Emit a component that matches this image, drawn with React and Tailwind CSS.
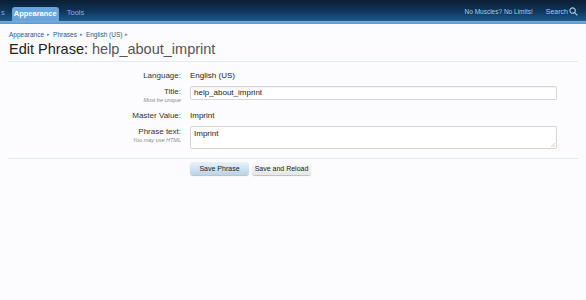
import React from "react";

const Crumb = ({ children }) => (
  <span className="flex items-center">
    <span>{children}</span>
    <span className="mx-[3px] text-[5px] text-[#5a7da3]">▸</span>
  </span>
);

const Row = ({ label, hint, children, top = false }) => (
  <div className={"flex " + (top ? "items-start" : "items-center")}>
    <div className="w-[181px] shrink-0 pr-0 text-right">
      <div className="text-[8px] leading-[11px] text-[#333]">{label}</div>
      {hint && (
        <div className="text-[5.5px] italic leading-[7px] text-[#8a8a8a]">{hint}</div>
      )}
    </div>
    <div className="ml-[9px] flex-1 pr-[29px]">{children}</div>
  </div>
);

export default function App() {
  return (
    <div className="min-h-[300px] w-[586px] bg-[#fcfcfe] font-['Liberation_Sans',Arial,sans-serif]">
      {/* top navigation */}
      <div className="flex h-[21px] items-end bg-gradient-to-b from-[#0a1f36] via-[#103357] to-[#1b5a8d]">
        <div className="flex h-[14px] items-end text-[7.5px] font-bold">
          <span className="ml-[1px] mr-[7px] pb-[3px] font-normal text-[#7fa9d0]">s</span>
          <span className="flex h-[14px] w-[47px] items-center justify-center rounded-t-[3px] bg-[#6aa5da] text-white">
            Appearance
          </span>
          <span className="ml-[8px] pb-[3px] font-normal text-[#8cb4d9]">Tools</span>
        </div>
        <div className="ml-auto flex items-center gap-[13px] pb-[4px] pr-[8px] text-[6.5px] text-[#a8cbeb]">
          <span>No Muscles? No Limits!</span>
          <span className="flex items-center gap-[1px] text-[7px]">
            Search
            <svg width="9" height="9" viewBox="0 0 10 10" fill="none" stroke="#a8cbeb" strokeWidth="1.2">
              <circle cx="4" cy="4" r="3" />
              <path d="M6.2 6.2 9.3 9.3" />
            </svg>
          </span>
        </div>
      </div>
      <div className="h-[3px] bg-gradient-to-b from-[#78b1e0] to-[#5e97c8]" />

      {/* breadcrumb + title */}
      <div className="px-[9px]">
        <div className="mt-[6px] flex text-[6.5px] leading-[9px] text-[#2c5688]">
          <Crumb>Appearance</Crumb>
          <Crumb>Phrases</Crumb>
          <Crumb>English (US)</Crumb>
        </div>
        <h1 className="mt-[1px] text-[14.5px] leading-[18px] text-[#222]">
          Edit Phrase: <span className="text-[#555]">help_about_imprint</span>
        </h1>
      </div>
      <div className="mx-[8px] mt-[3px] h-px bg-[#e3eef2]" />

      {/* form */}
      <div className="mt-[8px] flex flex-col">
        <Row label="Language:">
          <div className="text-[8px] leading-[11px] text-[#222]">English (US)</div>
        </Row>
        <div className="mt-[5px]">
          <Row label="Title:" hint="Must be unique" top>
            <div className="flex h-[14px] items-center rounded-[2px] border border-[#d6d6d6] bg-white px-[3px] text-[8px] text-[#222] shadow-[inset_0_1px_1px_rgba(0,0,0,0.05)]">
              help_about_imprint
            </div>
          </Row>
        </div>
        <div className="mt-[6px]">
          <Row label="Master Value:">
            <div className="text-[8px] leading-[11px] text-[#222]">Imprint</div>
          </Row>
        </div>
        <div className="mt-[5px]">
          <Row label="Phrase text:" hint="You may use HTML" top>
            <div className="relative h-[23px] rounded-[2px] border border-[#d6d6d6] bg-white px-[3px] pt-[1px] text-[8px] leading-[11px] text-[#222]">
              Imprint
              <svg className="absolute right-[1px] bottom-[1px]" width="5" height="5" viewBox="0 0 5 5" stroke="#b5b5b5" strokeWidth="0.6">
                <path d="M1 5 5 1M3 5 5 3" />
              </svg>
            </div>
          </Row>
        </div>
      </div>
      <div className="mx-[8px] mt-[9px] h-px bg-[#dcecf0]" />

      {/* buttons */}
      <div className="mt-[3px] flex gap-[3px] pl-[190px]">
        <button className="h-[13px] w-[59px] rounded-[3px] bg-gradient-to-b from-[#e9f2fa] to-[#b9d4ea] text-[7px] leading-[13px] text-[#222] shadow-[0_1px_1px_rgba(0,0,0,0.25)]">
          Save Phrase
        </button>
        <button className="h-[13px] w-[59px] rounded-[3px] bg-gradient-to-b from-[#fafafa] to-[#e6e6e6] text-[7px] leading-[13px] text-[#222] shadow-[0_1px_1px_rgba(0,0,0,0.25)]">
          Save and Reload
        </button>
      </div>
    </div>
  );
}
